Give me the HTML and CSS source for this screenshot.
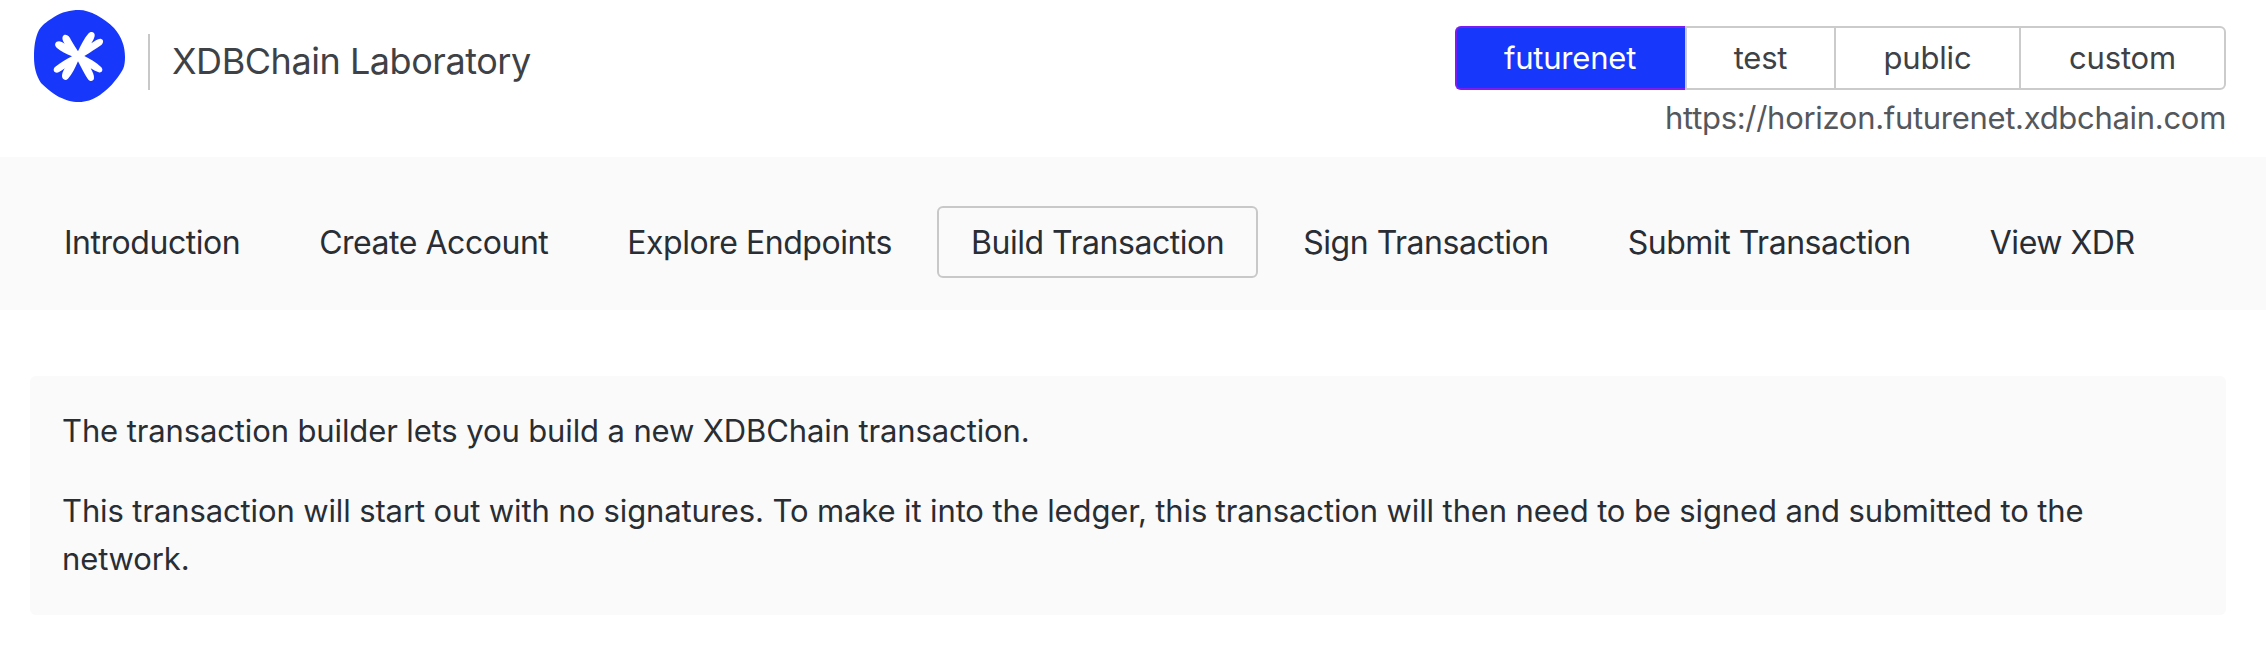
FILE: index.html
```html
<!DOCTYPE html>
<html lang="en">
<head>
<meta charset="utf-8">
<title>XDBChain Laboratory</title>
<link rel="stylesheet" href="styles.css">
</head>
<body>
<header class="header">
  <div class="brand">
    <svg class="logo" width="91" height="92" viewBox="0 0 91 92" aria-hidden="true">
      <path class="logo-blob" d="M45 0C56 0 70 8 80 18C88 27 91 37 91 47C91 57 89 60 84 67C78 75 74 79 66 85C58 90 52 92 45 92C37 92 32 90 25 87C17 82 12 78 7 73C2 65 0 57 0 47C0 37 1 28 5 20C10 13 14 11 20 7C28 2 36 0 45 0Z"/>
      <path class="logo-star" transform="translate(14 16) scale(.3333)" d="M90 76C100 56 108 38 122 22C129 14 142 18 140 30C139 36 135 44 130 52C140 44 150 37 158 38C168 40 167 51 160 57C145 68 125 80 109 90C125 98 145 108 160 124C167 132 161 142 152 139C145 137 137 133 128 127C134 138 139 148 138 157C137 167 125 168 120 160C110 145 100 125 90 106C82 125 72 145 60 158C52 166 42 160 42 150C42 143 45 136 50 127C40 135 33 139 27 140C16 140 14 128 22 122C38 110 55 100 72 91C55 84 38 76 26 65C17 57 22 46 33 46C38 46 44 49 50 53C42 42 41 32 48 27C57 23 65 32 69 42C76 54 84 66 90 76Z"/>
    </svg>
    <span class="brand-name">XDBChain Laboratory</span>
  </div>
  <div class="network">
    <div class="network-tabs">
      <a class="network-tab is-active tab-futurenet">futurenet</a>
      <a class="network-tab tab-test">test</a>
      <a class="network-tab tab-public">public</a>
      <a class="network-tab tab-custom">custom</a>
    </div>
    <div class="network-url">https://horizon.futurenet.xdbchain.com</div>
  </div>
</header>
<nav class="nav">
  <a class="nav-link">Introduction</a>
  <a class="nav-link">Create Account</a>
  <a class="nav-link">Explore Endpoints</a>
  <a class="nav-link is-active">Build Transaction</a>
  <a class="nav-link">Sign Transaction</a>
  <a class="nav-link">Submit Transaction</a>
  <a class="nav-link">View XDR</a>
</nav>
<main class="main">
  <section class="intro">
    <p class="intro-text">The transaction builder lets you build a new XDBChain transaction.</p>
    <p class="intro-text">This transaction will start out with no signatures. To make it into the ledger, this transaction will then need to be signed and submitted to the network.</p>
  </section>
</main>
</body>
</html>
```
FILE: styles.css
```css
* { box-sizing: border-box; }
html, body { margin: 0; padding: 0; background: #fff; }
body { font-family: Inter, "Liberation Sans", sans-serif; color: #292d34; height: 654px; overflow: hidden; }
.header { height: 157px; padding: 10px 40px 0 34px; display: flex; justify-content: space-between; align-items: flex-start; }
.brand { display: flex; align-items: flex-start; }
.logo { display: block; flex: none; }
.logo-blob { fill: #1737fb; }
.logo-star { fill: #fff; }
.brand-name { margin: 24px 0 0 23px; padding-left: 22px; border-left: 2px solid #c8c8c8; height: 56px; line-height: 54px; font-size: 36px; letter-spacing: -0.45px; color: #3e4146; white-space: nowrap; }
.network { margin-top: 16px; display: flex; flex-direction: column; align-items: flex-end; }
.network-tabs { display: flex; height: 64px; border: 2px solid #cbcbcb; border-radius: 6px; }
.network-tab { display: flex; align-items: center; justify-content: center; padding-bottom: 2px; font-size: 31px; letter-spacing: -0.2px; color: #3e4146; border-left: 2px solid #cbcbcb; }
.network-tab:first-child { border-left: 0; }
.tab-futurenet { width: 230px; }
.tab-test { width: 149px; }
.tab-public { width: 185px; }
.tab-custom { width: 205px; }
.network-tab.is-active { margin: -2px 0 -2px -2px; height: 64px; padding-right: 2px; background: #1737fb; color: #fff; border: 2px solid #7a1cf2; border-right: 0; border-radius: 6px 0 0 6px; }
.network-url { margin-top: 10px; font-size: 31px; letter-spacing: -0.3px; line-height: 36px; color: #54575c; white-space: nowrap; }
.nav { height: 153px; background: #fafafa; padding: 49px 30px 0; display: flex; align-items: flex-start; gap: 11px; }
.nav-link { display: block; height: 72px; line-height: 70px; padding: 0 32px; font-size: 32px; letter-spacing: -0.47px; color: #292d34; border: 2px solid transparent; border-radius: 6px; white-space: nowrap; }
.nav-link.is-active { border-color: #c8c8c8; }
.main { padding: 66px 40px 0 30px; }
.intro { height: 239px; background: #fafafa; border-radius: 6px; padding: 31px 32px 0; }
.intro-text { margin: 0 0 32px; font-size: 31px; letter-spacing: -0.12px; line-height: 48px; color: #292d34; }
```
